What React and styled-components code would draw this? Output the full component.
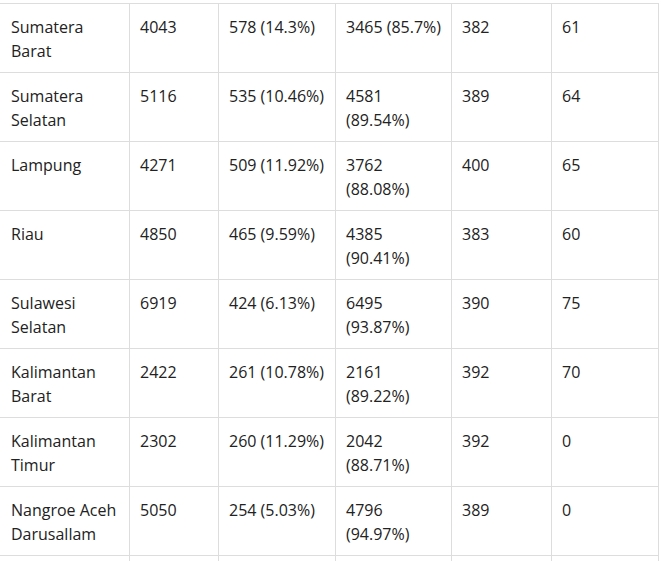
import React from "react";
import styled, { createGlobalStyle } from "styled-components";

const GlobalStyle = createGlobalStyle`
  html, body {
    margin: 0;
    padding: 0;
    background: #ffffff;
    overflow: hidden;
  }
  body {
    font-family: "Open Sans", "Liberation Sans", sans-serif;
  }
`;

const rows = [
  ["Sumatera Barat", "4043", "578 (14.3%)", "3465 (85.7%)", "382", "61"],
  ["Sumatera Selatan", "5116", "535 (10.46%)", "4581 (89.54%)", "389", "64"],
  ["Lampung", "4271", "509 (11.92%)", "3762 (88.08%)", "400", "65"],
  ["Riau", "4850", "465 (9.59%)", "4385 (90.41%)", "383", "60"],
  ["Sulawesi Selatan", "6919", "424 (6.13%)", "6495 (93.87%)", "390", "75"],
  ["Kalimantan Barat", "2422", "261 (10.78%)", "2161 (89.22%)", "392", "70"],
  ["Kalimantan Timur", "2302", "260 (11.29%)", "2042 (88.71%)", "392", "0"],
  ["Nangroe Aceh Darusallam", "5050", "254 (5.03%)", "4796 (94.97%)", "389", "0"],
];

const widths = [130, 89, 117, 116, 100, 107];

const Page = styled.div`
  padding-top: 3px;
`;

const Table = styled.table`
  width: 659px;
  table-layout: fixed;
  border-collapse: separate;
  border-spacing: 0;
  color: #222222;
  font-size: 16px;
  line-height: 24px;
`;

const Col = styled.col`
  width: ${(p) => p.$w}px;
`;

const Cell = styled.td`
  box-sizing: border-box;
  vertical-align: top;
  padding: 11px 8px 9px ${(p) => (p.$first ? 11 : 10)}px;
  border-top: 1px solid #dddddd;
  border-right: 1px solid #dddddd;
  text-align: left;
`;

const SpacerRow = styled.tr`
  height: 40px;
`;

const App = () => {
  return (
    <Page>
      <GlobalStyle />
      <Table>
        <colgroup>
          {widths.map((w, i) => (
            <Col key={i} $w={w} />
          ))}
        </colgroup>
        <tbody>
          {rows.map((row) => (
            <tr key={row[0]}>
              {row.map((val, i) => (
                <Cell key={i} $first={i === 0}>
                  {val}
                </Cell>
              ))}
            </tr>
          ))}
          <SpacerRow>
            {widths.map((w, i) => (
              <Cell key={i} $first={i === 0} />
            ))}
          </SpacerRow>
        </tbody>
      </Table>
    </Page>
  );
};

export default App;
